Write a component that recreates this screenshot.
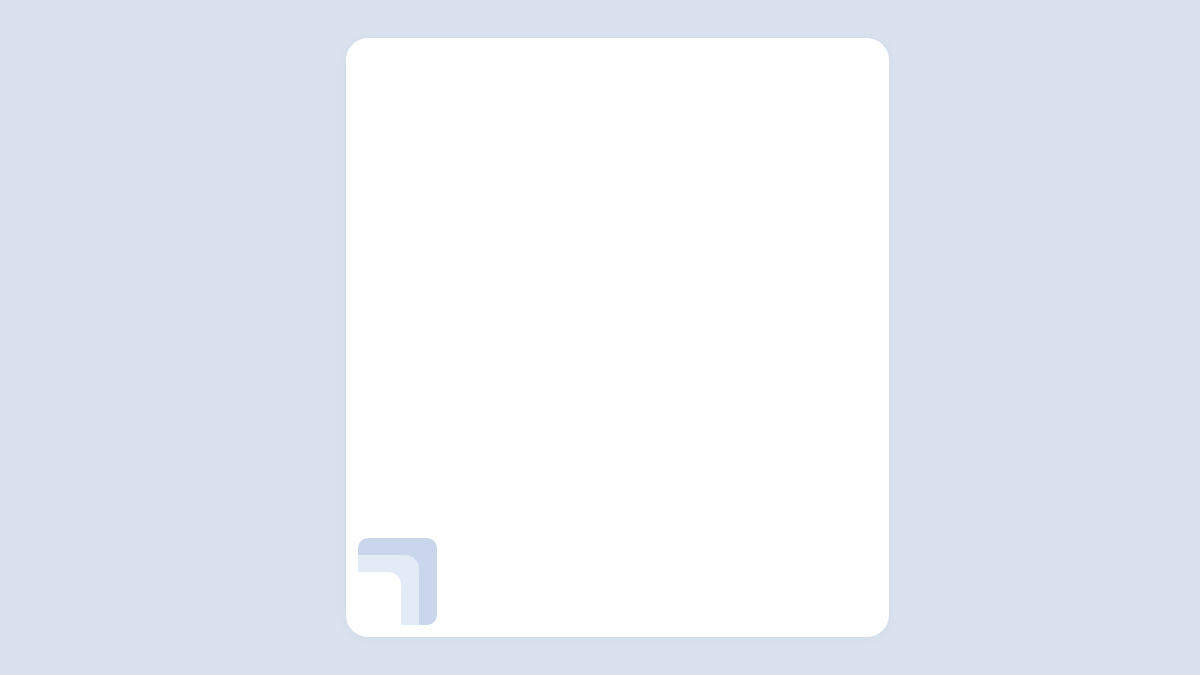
<script>
  // three nested layers, each one sits in the bottom left of the last
  const layers = ['outer', 'middle', 'inner'];
</script>

<div class="page">
  <div class="card">
    <div class="stack">
      <div class="layer {layers[0]}">
        <div class="layer {layers[1]}">
          <div class="layer {layers[2]}"></div>
        </div>
      </div>
    </div>
  </div>
</div>

<style>
  :global(body) {
    margin: 0;
    background-color: #d9e2ed;
  }

  .page {
    display: flex;
    justify-content: flex-start;
    align-items: flex-start;
    box-sizing: border-box;
    width: 1200px;
    height: 675px;
    padding: 38px 0 0 346px;
    background-color: #d9e2ed;
    overflow: hidden;
  }

  .card {
    display: flex;
    align-items: flex-end;
    box-sizing: border-box;
    width: 543px;
    height: 599px;
    padding: 12px;
    border-radius: 22px;
    background-color: #fff;
    box-shadow: 0 1px 8px rgba(170, 186, 210, 0.14);
  }

  .stack {
    width: 79px;
    height: 87px;
  }

  .layer {
    box-sizing: border-box;
  }

  .outer {
    width: 100%;
    height: 100%;
    padding: 17px 18px 0 0;
    border-radius: 10px;
    background-color: #c9d6ec;
  }

  .middle {
    width: 100%;
    height: 100%;
    padding: 17px 18px 0 0;
    border-radius: 0 14px 0 0;
    background-color: #e3ebf6;
  }

  .inner {
    width: 100%;
    height: 100%;
    border-radius: 0 13px 0 0;
    background-color: #fff;
  }
</style>
